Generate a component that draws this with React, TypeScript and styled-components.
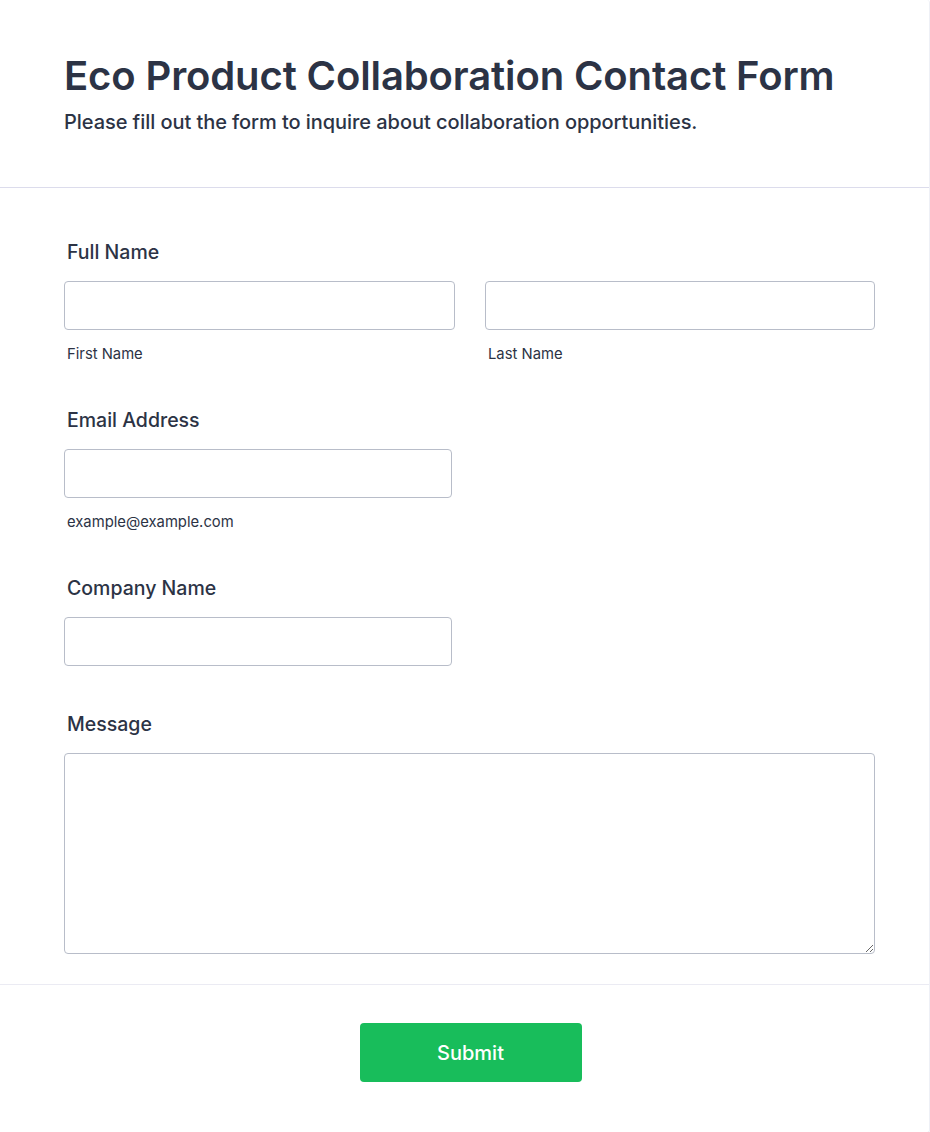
import React from "react";
import styled, { createGlobalStyle } from "styled-components";

const Global = createGlobalStyle`
  html, body { margin: 0; padding: 0; background: #ffffff; }
  body {
    font-family: Inter, "Noto Sans", sans-serif;
    color: #2c3345;
  }
  * { box-sizing: border-box; }
`;

const Card = styled.form`
  width: 930px;
  min-height: 1132px;
  background: #ffffff;
  border-right: 1px solid #eef0f6;
  border-bottom: 1px solid #eef0f6;
  border-radius: 0 3px 3px 0;
  display: flex;
  flex-direction: column;
`;

const Header = styled.header`
  padding: 52px 64px 50px;
  border-bottom: 1px solid #dcdcec;
`;

const Title = styled.h1`
  margin: 0;
  font-size: 40px;
  line-height: 48px;
  font-weight: 600;
  letter-spacing: -0.12px;
  color: #2c3345;
`;

const Subtitle = styled.p`
  margin: 7px 0 0;
  font-size: 20px;
  line-height: 30px;
  font-weight: 500;
  letter-spacing: -0.06px;
  color: #2c3345;
`;

const Body = styled.div`
  padding: 52px 55px 30px 64px;
  display: flex;
  flex-direction: column;
  border-bottom: 1px solid #ebebf3;
`;

const Field = styled.div<{ $mb?: number }>`
  display: flex;
  flex-direction: column;
  margin-bottom: ${(p) => (p.$mb ?? 45)}px;
`;

const Label = styled.label`
  font-size: 19.5px;
  line-height: 24px;
  font-weight: 500;
  color: #2c3345;
  padding-left: 3px;
  margin-bottom: 17px;
`;

const Row = styled.div`
  display: grid;
  grid-template-columns: 391px 390px;
  column-gap: 30px;
`;

const Col = styled.div`
  display: flex;
  flex-direction: column;
`;

const Input = styled.input<{ $w?: number }>`
  width: ${(p) => (p.$w ? `${p.$w}px` : "100%")};
  height: 49px;
  border: 1px solid #b8bdc9;
  border-radius: 4px;
  background: #ffffff;
  font-family: inherit;
  font-size: 16px;
  padding: 0 12px;
  outline: none;
`;

const Sub = styled.span`
  font-size: 14.8px;
  line-height: 18px;
  color: #2c3345;
  padding-left: 3px;
  margin-top: 15px;
`;

const TextArea = styled.textarea`
  width: 811px;
  height: 201px;
  border: 1px solid #b8bdc9;
  border-radius: 4px;
  font-family: inherit;
  font-size: 16px;
  padding: 10px 12px;
  resize: both;
  outline: none;
  display: block;
`;

const Footer = styled.div`
  display: flex;
  justify-content: center;
  padding: 38px 0 50px;
`;

const Submit = styled.button`
  width: 222px;
  height: 59px;
  border: none;
  border-radius: 4px;
  background: #18bd5b;
  color: #ffffff;
  font-family: inherit;
  font-size: 20px;
  font-weight: 500;
  margin-left: 12px;
  cursor: pointer;
`;

export default function App() {
  return (
    <>
      <Global />
      <Card onSubmit={(e) => e.preventDefault()}>
        <Header>
          <Title>Eco Product Collaboration Contact Form</Title>
          <Subtitle>Please fill out the form to inquire about collaboration opportunities.</Subtitle>
        </Header>
        <Body>
          <Field>
            <Label>Full Name</Label>
            <Row>
              <Col>
                <Input type="text" />
                <Sub>First Name</Sub>
              </Col>
              <Col>
                <Input type="text" />
                <Sub>Last Name</Sub>
              </Col>
            </Row>
          </Field>
          <Field $mb={45}>
            <Label>Email Address</Label>
            <Input type="email" $w={388} />
            <Sub>example@example.com</Sub>
          </Field>
          <Field $mb={46}>
            <Label>Company Name</Label>
            <Input type="text" $w={388} />
          </Field>
          <Field $mb={0}>
            <Label>Message</Label>
            <TextArea />
          </Field>
        </Body>
        <Footer>
          <Submit type="submit">Submit</Submit>
        </Footer>
      </Card>
    </>
  );
}
